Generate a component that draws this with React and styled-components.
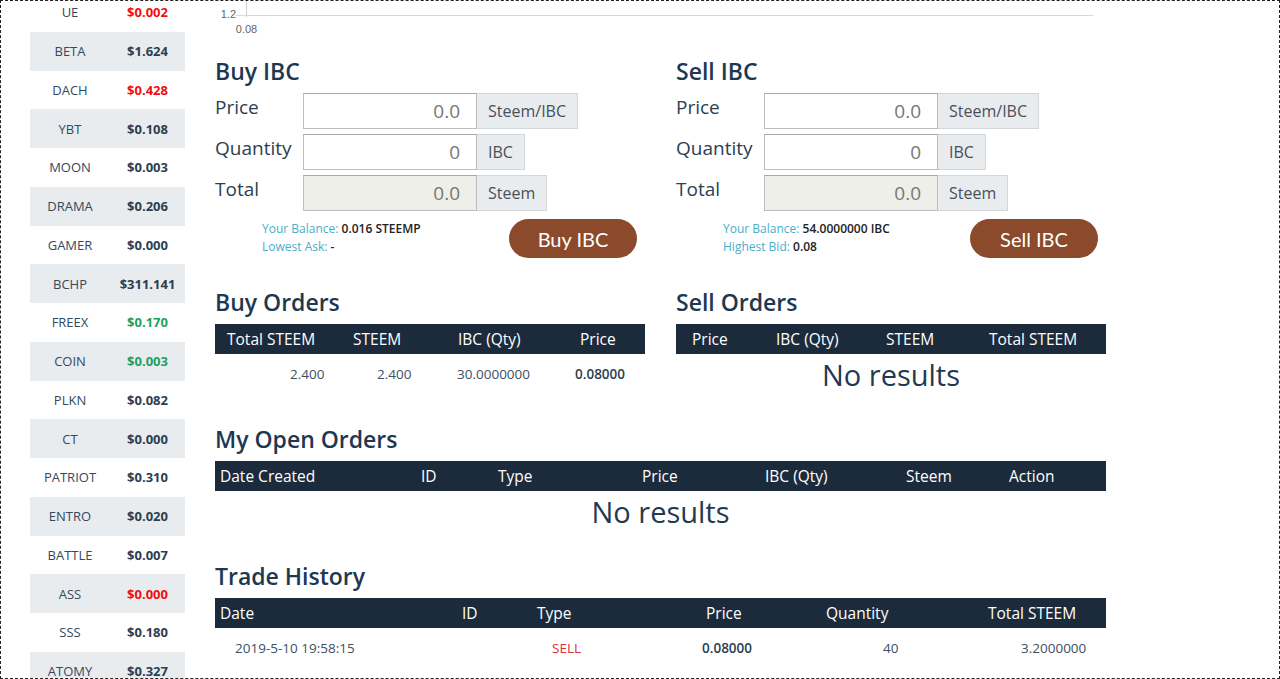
import React from 'react'
import styled, { createGlobalStyle } from 'styled-components'

const GlobalStyle = createGlobalStyle`
  body {
    margin: 0;
    font-family: "Open Sans", "Noto Sans", sans-serif;
    background: #fff;
  }
`;

// Outer page frame (dashed outline round the viewport)
const Frame = styled.div`
  width: 1280px;
  height: 679px;
  box-sizing: border-box;
  border: 1px dashed #222;
  overflow: hidden;
  display: flex;
  align-items: flex-start;
  gap: 30px;
  padding-left: 29px;
`;

/* ---------- token sidebar ---------- */
const Sidebar = styled.div`
  width: 155px;
  flex-shrink: 0;
  /* page is scrolled a little, first row is cut */
  margin-top: -8px;
`;

const CoinRow = styled.div`
  display: grid;
  grid-template-columns: 80px 75px;
  align-items: center;
  height: 38.75px;
  text-align: center;
  font-size: 13px;
  background: ${p => (p.$striped ? '#e9ecef' : 'transparent')};
`;

const CoinName = styled.span`
  color: #34495e;
`;

const trendColors = { up: '#1f9f61', down: '#f20d0d', flat: '#2c3e50' };

const CoinPrice = styled.span`
  font-weight: 700;
  color: ${p => trendColors[p.$trend]};
`;

/* ---------- main column ---------- */
const Main = styled.div`
  width: 891px;
  flex-shrink: 0;
`;

const Stack = styled.div`
  display: flex;
  flex-direction: column;
  gap: 30px;
`;

const TwoCol = styled.div`
  display: grid;
  grid-template-columns: 430px 430px;
  column-gap: 31px;
  align-items: start;
`;

const Heading = styled.h2`
  margin: 0 0 7px;
  font-size: 23px;
  line-height: 29px;
  font-weight: 600;
  color: #1d3850;
`;

/* order form */
const FieldRow = styled.div`
  display: grid;
  grid-template-columns: 88px auto;
  height: 36px;
  margin-bottom: 5px;

  &:last-of-type {
    margin-bottom: 0;
  }
`;

const FieldLabel = styled.label`
  font-size: 19px;
  line-height: 28px;
  color: #2c3e50;
`;

const InputGroup = styled.div`
  display: flex;
`;

const AmountInput = styled.input`
  width: 174px;
  height: 36px;
  box-sizing: border-box;
  border: 1px solid #bdbdbd;
  border-top-color: #a9a9a9;
  padding: 0 16px 0 0;
  text-align: right;
  font-family: "Open Sans", sans-serif;
  font-size: 19px;
  color: #777;
  background: ${p => (p.$locked ? '#efefea' : '#fff')};
  outline: none;
`;

const Addon = styled.span`
  height: 36px;
  box-sizing: border-box;
  border: 1px solid #d3d7db;
  border-left: none;
  background: #e9ecef;
  padding: 0 11px;
  font-size: 16px;
  line-height: 34px;
  color: #495057;
`;

const InfoRow = styled.div`
  display: flex;
  justify-content: space-between;
  align-items: flex-start;
  margin-top: 8px;
  padding: 0 8px 0 47px;
`;

const Info = styled.div`
  font-size: 12px;
  line-height: 18px;
  padding-top: 1px;
`;

const InfoKey = styled.span`
  color: #4aaec6;
`;

const InfoValue = styled.span`
  font-weight: 600;
  color: #222;
`;

const TradeButton = styled.button`
  width: 128px;
  height: 39px;
  border: none;
  border-radius: 20px;
  background: #8b4a2c;
  color: #fff;
  font-family: Lato, "Open Sans", sans-serif;
  font-size: 20px;
  cursor: pointer;
`;

/* tables */
const TableHead = styled.div`
  display: grid;
  grid-template-columns: ${p => p.$cols};
  height: 30px;
  background: #1c2b3c;
  color: #fff;
  font-size: 15.5px;
  line-height: 30px;
  white-space: nowrap;
`;

const HeadCell = styled.div`
  padding-left: ${p => p.$pad}px;
`;

const BodyRow = styled.div`
  display: grid;
  grid-template-columns: ${p => p.$cols};
  height: 40px;
  line-height: 40px;
  font-size: 13.5px;
  color: #3d4f61;
  white-space: nowrap;
`;

const Cell = styled.div`
  padding-left: ${p => p.$inset || 0}px;
  font-weight: ${p => (p.$bold ? 600 : 400)};
  color: ${p => p.$color || 'inherit'};
`;

const Empty = styled.div`
  text-align: center;
  font-size: 29px;
  line-height: 41px;
  color: #1f3a52;
`;

/* ---------- data ---------- */
const coins = [
  ['UE', '$0.002', 'down'],
  ['BETA', '$1.624', 'flat'],
  ['DACH', '$0.428', 'down'],
  ['YBT', '$0.108', 'flat'],
  ['MOON', '$0.003', 'flat'],
  ['DRAMA', '$0.206', 'flat'],
  ['GAMER', '$0.000', 'flat'],
  ['BCHP', '$311.141', 'flat'],
  ['FREEX', '$0.170', 'up'],
  ['COIN', '$0.003', 'up'],
  ['PLKN', '$0.082', 'flat'],
  ['CT', '$0.000', 'flat'],
  ['PATRIOT', '$0.310', 'flat'],
  ['ENTRO', '$0.020', 'flat'],
  ['BATTLE', '$0.007', 'flat'],
  ['ASS', '$0.000', 'down'],
  ['SSS', '$0.180', 'flat'],
  ['ATOMY', '$0.327', 'flat'],
];

const buyCols = '126px 105px 122px 77px';
const sellCols = '84px 110px 103px 133px';
const openCols = '201px 77px 144px 123px 141px 103px 102px';
const tradeCols = '242px 75px 169px 120px 162px 123px';

function PriceChart() {
  // bottom edge of the price chart, the rest is scrolled away
  return (
    <svg width="891" height="56" style={{ display: 'block' }}>
      <line x1="31.5" y1="0" x2="31.5" y2="16" stroke="#ccc" />
      <line x1="21" y1="14.5" x2="878" y2="14.5" stroke="#d9d9d9" />
      <text x="21" y="17" fontSize="11" textAnchor="end" fill="#666" fontFamily="Liberation Sans, sans-serif">1.2</text>
      <text x="31.5" y="32" fontSize="11" textAnchor="middle" fill="#666" fontFamily="Liberation Sans, sans-serif">0.08</text>
    </svg>
  );
}

function OrderForm({ title, balance, quoteLabel, quote, action }) {
  return (
    <div>
      <Heading>{title}</Heading>
      <FieldRow>
        <FieldLabel>Price</FieldLabel>
        <InputGroup>
          <AmountInput defaultValue="0.0" readOnly />
          <Addon>Steem/IBC</Addon>
        </InputGroup>
      </FieldRow>
      <FieldRow>
        <FieldLabel>Quantity</FieldLabel>
        <InputGroup>
          <AmountInput defaultValue="0" readOnly />
          <Addon>IBC</Addon>
        </InputGroup>
      </FieldRow>
      <FieldRow>
        <FieldLabel>Total</FieldLabel>
        <InputGroup>
          <AmountInput $locked defaultValue="0.0" readOnly />
          <Addon>Steem</Addon>
        </InputGroup>
      </FieldRow>
      <InfoRow>
        <Info>
          <div><InfoKey>Your Balance: </InfoKey><InfoValue>{balance}</InfoValue></div>
          <div><InfoKey>{quoteLabel}: </InfoKey><InfoValue>{quote}</InfoValue></div>
        </Info>
        <TradeButton>{action}</TradeButton>
      </InfoRow>
    </div>
  );
}

export default function App() {
  return (
    <>
      <GlobalStyle />
      <Frame>
        <Sidebar>
          {coins.map(([name, price, trend], i) => (
            <CoinRow key={name} $striped={i % 2 === 1}>
              <CoinName>{name}</CoinName>
              <CoinPrice $trend={trend}>{price}</CoinPrice>
            </CoinRow>
          ))}
        </Sidebar>

        <Main>
          <PriceChart />
          <Stack>
            <TwoCol>
              <OrderForm title="Buy IBC" balance="0.016 STEEMP" quoteLabel="Lowest Ask" quote="-" action="Buy IBC" />
              <OrderForm title="Sell IBC" balance="54.0000000 IBC" quoteLabel="Highest Bid" quote="0.08" action="Sell IBC" />
            </TwoCol>

            <TwoCol>
              <div>
                <Heading>Buy Orders</Heading>
                <TableHead $cols={buyCols}>
                  <HeadCell $pad={12}>Total STEEM</HeadCell>
                  <HeadCell $pad={12}>STEEM</HeadCell>
                  <HeadCell $pad={12}>IBC (Qty)</HeadCell>
                  <HeadCell $pad={12}>Price</HeadCell>
                </TableHead>
                <BodyRow $cols={buyCols}>
                  <Cell $inset={75}>2.400</Cell>
                  <Cell $inset={36}>2.400</Cell>
                  <Cell $inset={11}>30.0000000</Cell>
                  <Cell $inset={7} $bold $color="#2c3e50">0.08000</Cell>
                </BodyRow>
              </div>
              <div>
                <Heading>Sell Orders</Heading>
                <TableHead $cols={sellCols}>
                  <HeadCell $pad={16}>Price</HeadCell>
                  <HeadCell $pad={16}>IBC (Qty)</HeadCell>
                  <HeadCell $pad={16}>STEEM</HeadCell>
                  <HeadCell $pad={16}>Total STEEM</HeadCell>
                </TableHead>
                <Empty>No results</Empty>
              </div>
            </TwoCol>

            <div>
              <Heading>My Open Orders</Heading>
              <TableHead $cols={openCols}>
                {['Date Created', 'ID', 'Type', 'Price', 'IBC (Qty)', 'Steem', 'Action'].map(h => (
                  <HeadCell key={h} $pad={5}>{h}</HeadCell>
                ))}
              </TableHead>
              <Empty>No results</Empty>
            </div>

            <div>
              <Heading>Trade History</Heading>
              <TableHead $cols={tradeCols}>
                {['Date', 'ID', 'Type', 'Price', 'Quantity', 'Total STEEM'].map(h => (
                  <HeadCell key={h} $pad={5}>{h}</HeadCell>
                ))}
              </TableHead>
              <BodyRow $cols={tradeCols}>
                <Cell $inset={20}>2019-5-10 19:58:15</Cell>
                <Cell />
                <Cell $inset={20} $color="#d9303a">SELL</Cell>
                <Cell $inset={1} $bold $color="#2c3e50">0.08000</Cell>
                <Cell $inset={62}>40</Cell>
                <Cell $inset={38}>3.2000000</Cell>
              </BodyRow>
            </div>
          </Stack>
        </Main>
      </Frame>
    </>
  );
}
